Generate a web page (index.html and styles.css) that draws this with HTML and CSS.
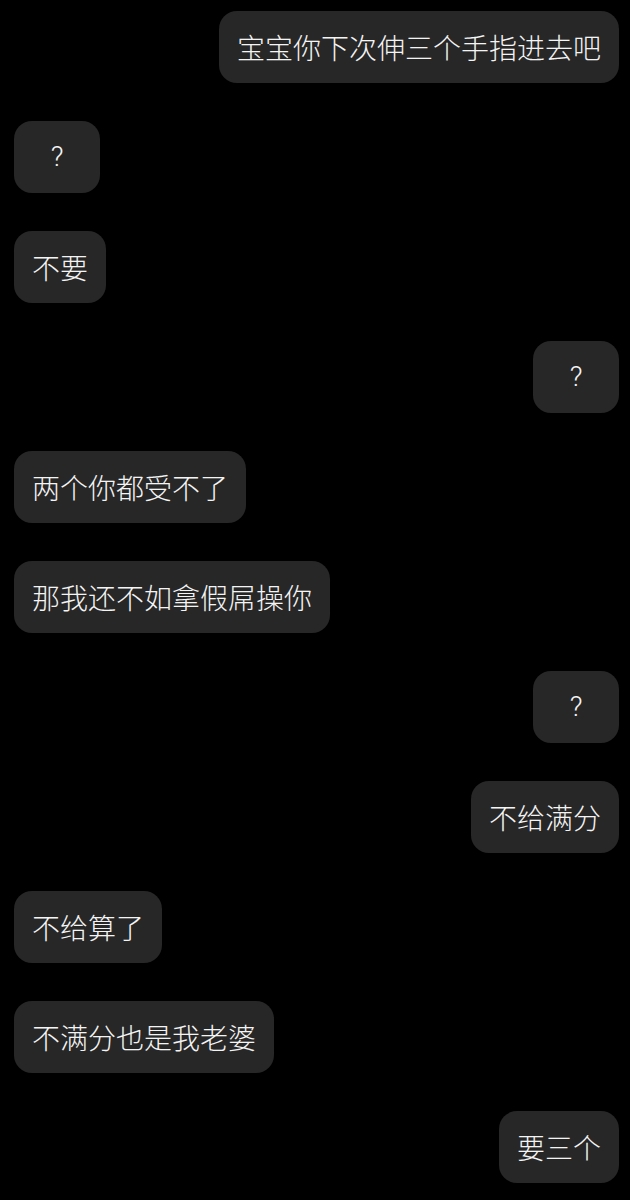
FILE: index.html
```html
<!DOCTYPE html>
<html lang="zh-CN">
<head>
    <meta charset="UTF-8">
    <meta name="viewport" content="width=device-width, initial-scale=1.0">
    <title>Chat</title>
    <link rel="stylesheet" href="styles.css">
</head>
<body>
    <div class="chat">
        <div class="msg me">宝宝你下次伸三个手指进去吧</div>
        <div class="msg them short">?</div>
        <div class="msg them">不要</div>
        <div class="msg me short">?</div>
        <div class="msg them">两个你都受不了</div>
        <div class="msg them">那我还不如拿假屌操你</div>
        <div class="msg me short">?</div>
        <div class="msg me">不给满分</div>
        <div class="msg them">不给算了</div>
        <div class="msg them">不满分也是我老婆</div>
        <div class="msg me">要三个</div>
    </div>
</body>
</html>
```

FILE: styles.css
```css
body {
    margin: 0;
    background: #000;
    font-family: "Noto Sans CJK SC", "Noto Sans", sans-serif;
}
.chat {
    display: flex;
    flex-direction: column;
    gap: 38px;
    padding: 11px 11px 0 14px;
}
.msg {
    background: #272727;
    color: #f4f4f4;
    font-size: 28px;
    font-weight: 300;
    line-height: 72px;
    height: 72px;
    padding: 0 18px;
    border-radius: 18px;
    white-space: nowrap;
}
.me {
    align-self: flex-end;
}
.them {
    align-self: flex-start;
}
.short {
    min-width: 50px;
    text-align: center;
    font-family: "Roboto", "Noto Sans", sans-serif;
}
```
